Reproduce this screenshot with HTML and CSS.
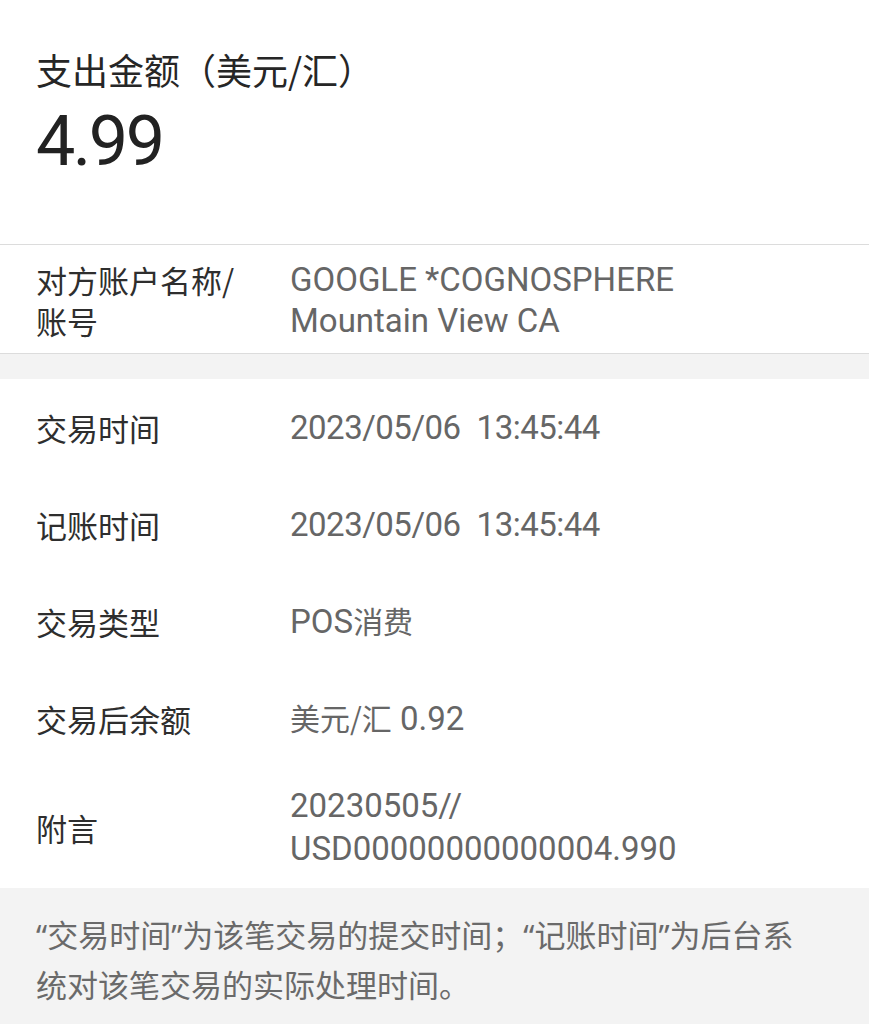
FILE: index.html
```html
<!DOCTYPE html>
<html lang="zh-CN">
<head>
<meta charset="utf-8">
<title>交易详情</title>
<link rel="stylesheet" href="styles.css">
</head>
<body>
<div class="page">
  <section class="summary">
    <div class="summary-title">支出金额（美元/汇）</div>
    <div class="summary-amount">4.99</div>
  </section>

  <section class="party">
    <div class="label">对方账户名称/<br>账号</div>
    <div class="value">GOOGLE *COGNOSPHERE<br>Mountain View CA</div>
  </section>

  <div class="spacer"></div>

  <section class="details">
    <div class="row">
      <div class="label">交易时间</div>
      <div class="value datetime">2023/05/06<span class="time">13:45:44</span></div>
    </div>
    <div class="row">
      <div class="label">记账时间</div>
      <div class="value datetime">2023/05/06<span class="time">13:45:44</span></div>
    </div>
    <div class="row">
      <div class="label">交易类型</div>
      <div class="value">POS<span class="cjk">消费</span></div>
    </div>
    <div class="row">
      <div class="label">交易后余额</div>
      <div class="value"><span class="cjk">美元/汇</span> 0.92</div>
    </div>
    <div class="row row-multi">
      <div class="label">附言</div>
      <div class="value">20230505//<br>USD00000000000004.990</div>
    </div>
  </section>

  <footer class="note">“交易时间”为该笔交易的提交时间；“记账时间”为后台系统对该笔交易的实际处理时间。</footer>
</div>
</body>
</html>
```

FILE: styles.css
```css
html, body {
  margin: 0;
  padding: 0;
  background: #ffffff;
}

body {
  font-family: "Noto Sans CJK SC", sans-serif;
  color: #2b2b2b;
}

.page {
  display: flex;
  flex-direction: column;
}

.summary {
  padding: 49px 36px 69px;
  display: flex;
  flex-direction: column;
}

.summary-title {
  font-size: 36px;
  line-height: 40px;
  color: #262626;
}

.summary-amount {
  margin-top: 18px;
  font-family: Roboto, "Noto Sans CJK SC", sans-serif;
  font-size: 70px;
  line-height: 68px;
  letter-spacing: -2.5px;
  color: #222222;
}

.party {
  display: grid;
  grid-template-columns: 254px 1fr;
  padding: 14px 36px 12px;
  border-top: 1px solid #dcdcdc;
  border-bottom: 1px solid #dcdcdc;
  line-height: 41px;
}

.label {
  font-size: 31px;
  color: #2e2e2e;
}

.value {
  font-family: Roboto, "Noto Sans CJK SC", sans-serif;
  font-size: 33px;
  color: #666666;
}

.value .cjk {
  font-family: "Noto Sans CJK SC", sans-serif;
  font-size: 30px;
  line-height: 1;
}

.datetime {
  letter-spacing: -0.5px;
}

.datetime .time {
  margin-left: 16px;
}

.spacer {
  height: 25px;
  background: #f3f3f3;
}

.details {
  display: flex;
  flex-direction: column;
}

.row {
  display: grid;
  grid-template-columns: 254px 1fr;
  align-items: center;
  padding: 27px 36px;
  line-height: 43px;
}

.row-multi {
  padding: 17px 36px 18px;
}

.note {
  background: #f3f3f3;
  padding: 22px 52px 40px 36px;
  font-family: "Noto Sans", "Noto Sans CJK SC", sans-serif;
  font-size: 31px;
  line-height: 50px;
  color: #6a6a6a;
}
```
